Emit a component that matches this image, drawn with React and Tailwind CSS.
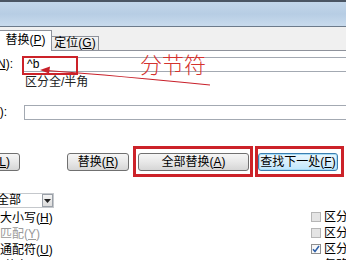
export default function App() {
  const font = "font-['Liberation_Sans','Noto_Sans_CJK_SC',sans-serif]"
  const btn =
    'h-[18px] shrink-0 rounded-[3px] border border-[#707070] bg-gradient-to-b from-[#f6f6f6] via-[#e8e8e8] to-[#d6d6d6] text-[12px] leading-[16px] text-black flex items-center justify-center whitespace-nowrap'

  const rows = [
    { text: '区分大小写', key: 'H', gray: false, right: '区分全/半角(M)', box: 'off' },
    { text: '全字匹配', key: 'Y', gray: true, right: '区分前缀(X)', box: 'off' },
    { text: '使用通配符', key: 'U', gray: false, right: '区分后缀(T)', box: 'on' },
    { text: '同音(英文)', key: 'W', gray: false, right: '忽略标点符号(S)', box: 'off' },
  ]

  return (
    <div className={`relative w-[346px] h-[260px] overflow-hidden bg-white text-black leading-[15px] ${font}`}>
      {/* title bar */}
      <div className="h-[2px] bg-[#4a5563]" />
      <div className="h-[24px] bg-gradient-to-b from-[#c2d6ea] via-[#b7cde4] to-[#c9dbed]" />
      <div className="h-px bg-[#6d7b8b]" />

      {/* tabs */}
      <div className="h-[23px] bg-[#f0f0f0] flex items-end">
        <div className="relative z-10 -mb-px h-[21px] w-[52px] bg-white border border-[#8e929b] border-l-0 border-b-0 text-[12px] leading-[19px] text-center whitespace-nowrap">
          替换(<u>P</u>)
        </div>
        <div className="h-[14px] w-[47px] bg-gradient-to-b from-[#f4f4f4] to-[#e4e4e4] border border-[#8e929b] border-l-0 border-b-0 text-[12px] leading-[13px] text-center whitespace-nowrap">
          定位(<u>G</u>)
        </div>
      </div>

      {/* panel */}
      <div className="border-t border-[#8e929b]">
        <div className="mt-[6px] h-[15px] flex items-center">
          <div className="w-[13px] h-[15px] overflow-hidden flex justify-end shrink-0">
            <span className="text-[12px] leading-[15px] whitespace-nowrap">查找内容(<u>N</u>):</span>
          </div>
          <div className="ml-[9px] flex-1 h-[15px] border border-[#a3a9b2] border-r-0 pl-[4px] text-[12px] leading-[12px]">
            ^b
          </div>
        </div>
        <div className="ml-[25px] mt-[3px] h-[14px] text-[12px] leading-[14px] text-[#222] whitespace-nowrap">区分全/半角</div>

        <div className="mt-[16px] h-[15px] flex items-center">
          <div className="w-[7px] h-[15px] overflow-hidden flex justify-end shrink-0">
            <span className="text-[12px] leading-[15px] whitespace-nowrap">替换为(<u>I</u>):</span>
          </div>
          <div className="ml-[17px] flex-1 h-[15px] border border-[#a3a9b2] border-r-0" />
        </div>

        {/* buttons */}
        <div className="mt-[33px] h-[18px] flex">
          <div className="w-[20px] h-[18px] overflow-hidden flex justify-end shrink-0">
            <div className={`${btn} w-[76px]`}>&lt;&lt; 更少(<u>L</u>)</div>
          </div>
          <div className={`${btn} ml-[47px] w-[62px]`}>替换(<u>R</u>)</div>
          <div className={`${btn} ml-[9px] w-[111px]`}>全部替换(<u>A</u>)</div>
          <div className="ml-[9px] w-[80px] h-[18px] shrink-0 rounded-[3px] border border-[#3c7fb1] bg-gradient-to-b from-[#eaf6fd] via-[#d9f0fc] to-[#bee6fd] text-[12px] leading-[16px] flex items-center justify-center whitespace-nowrap shadow-[inset_0_0_0_1px_#a8dcf5]">
            查找下一处(<u>F</u>)
          </div>
        </div>

        {/* search scope */}
        <div className="mt-[22px] flex items-center h-[15px]">
          <div className="w-[54px] h-[15px] border border-[#c5c8cc] border-l-0 flex items-center">
            <span className="-ml-[3px] text-[12px] leading-[13px] flex-1 whitespace-nowrap">全部</span>
            <div className="w-[11px] h-[13px] border border-[#9aa0a8] bg-gradient-to-b from-[#f5f5f5] to-[#dcdcdc] flex items-center justify-center">
              <svg width="7" height="4" viewBox="0 0 7 4">
                <polygon points="0,0 7,0 3.5,4" fill="#222" />
              </svg>
            </div>
          </div>
        </div>

        {/* options */}
        <div className="mt-px">
          {rows.map((r) => (
            <div key={r.key} className="h-[16px] flex items-center">
              <div className="flex-1 h-[16px] overflow-hidden whitespace-nowrap">
                <span className={`-ml-[24px] inline-block text-[12px] leading-[16px] ${r.gray ? 'text-[#9a9a9a]' : 'text-black'}`}>
                  {r.text}(<u>{r.key}</u>)
                </span>
              </div>
              <div className="w-[35px] h-[16px] shrink-0 flex items-center overflow-hidden whitespace-nowrap">
                <div
                  className={`w-[10px] h-[10px] shrink-0 border flex items-center justify-center ${
                    r.box === 'on' ? 'border-[#8f8f8f] bg-gradient-to-br from-[#f4f4f4] to-[#ffffff]' : 'border-[#b6b6b6] bg-[#e4e4e4]'
                  }`}
                >
                  {r.box === 'on' && (
                    <svg width="8" height="8" viewBox="0 0 8 8">
                      <path d="M1 4.2 L3 6.5 L7 1" stroke="#2d5fa8" strokeWidth="1.5" fill="none" />
                    </svg>
                  )}
                </div>
                <span className="ml-[3px] text-[12px] leading-[16px]">{r.right}</span>
              </div>
            </div>
          ))}
        </div>
      </div>

      {/* annotations */}
      <div className="absolute left-[22px] top-[56px] w-[56px] h-[19px] border-2 border-[#cc2229]" />
      <div className="absolute left-[133px] top-[146px] w-[120px] h-[31px] border-[3px] border-[#cc2229]" />
      <div className="absolute left-[255px] top-[146px] w-[89px] h-[31px] border-[3px] border-[#cc2229]" />
      <div className="absolute left-[140px] top-[50px] text-[22px] leading-[26px] text-[#d4322e] font-['Noto_Sans_CJK_SC',sans-serif] font-light whitespace-nowrap">
        分节符
      </div>
      <svg className="absolute left-0 top-0" width="346" height="260" viewBox="0 0 346 260">
        <path d="M47 70.5 Q 120 76 210 85" stroke="#c8202a" strokeWidth="1.2" fill="none" />
        <polygon points="40,70 50,66.5 49,73.5" fill="#c8202a" />
      </svg>
    </div>
  )
}
